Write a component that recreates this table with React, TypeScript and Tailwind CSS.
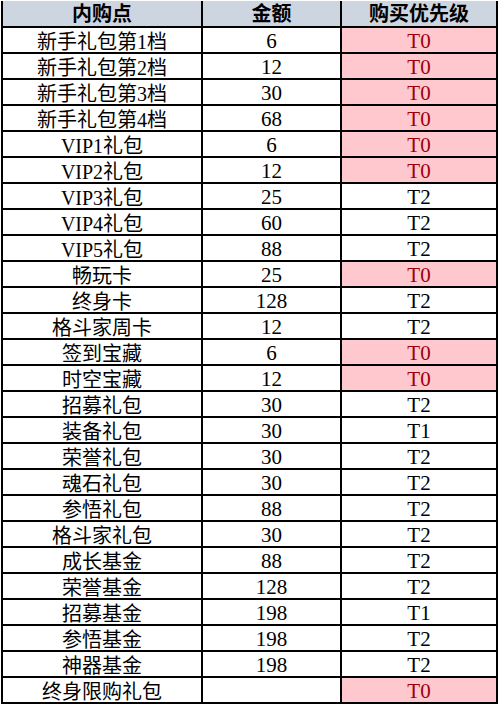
import React from 'react'

type Row = { name: string; amount: string; level: string }

const ROWS: Row[] = [
  { name: '新手礼包第1档', amount: '6', level: 'T0' },
  { name: '新手礼包第2档', amount: '12', level: 'T0' },
  { name: '新手礼包第3档', amount: '30', level: 'T0' },
  { name: '新手礼包第4档', amount: '68', level: 'T0' },
  { name: 'VIP1礼包', amount: '6', level: 'T0' },
  { name: 'VIP2礼包', amount: '12', level: 'T0' },
  { name: 'VIP3礼包', amount: '25', level: 'T2' },
  { name: 'VIP4礼包', amount: '60', level: 'T2' },
  { name: 'VIP5礼包', amount: '88', level: 'T2' },
  { name: '畅玩卡', amount: '25', level: 'T0' },
  { name: '终身卡', amount: '128', level: 'T2' },
  { name: '格斗家周卡', amount: '12', level: 'T2' },
  { name: '签到宝藏', amount: '6', level: 'T0' },
  { name: '时空宝藏', amount: '12', level: 'T0' },
  { name: '招募礼包', amount: '30', level: 'T2' },
  { name: '装备礼包', amount: '30', level: 'T1' },
  { name: '荣誉礼包', amount: '30', level: 'T2' },
  { name: '魂石礼包', amount: '30', level: 'T2' },
  { name: '参悟礼包', amount: '88', level: 'T2' },
  { name: '格斗家礼包', amount: '30', level: 'T2' },
  { name: '成长基金', amount: '88', level: 'T2' },
  { name: '荣誉基金', amount: '128', level: 'T2' },
  { name: '招募基金', amount: '198', level: 'T1' },
  { name: '参悟基金', amount: '198', level: 'T2' },
  { name: '神器基金', amount: '198', level: 'T2' },
  { name: '终身限购礼包', amount: '', level: 'T0' },
]

const font = "font-['Liberation_Serif','Noto_Sans_CJK_SC',serif]"

export default function App() {
  return (
    <div className={`w-[499px] h-[704px] bg-white pl-[1px] ${font}`}>
      {/* Header */}
      <div className="grid grid-cols-[202px_139px_156px] h-[28px] pt-[1px]">
        <div className="flex items-center justify-center border-x-2 border-b-2 border-black bg-[#cdd5e1] text-[20px] font-bold leading-none">
          内购点
        </div>
        <div className="flex items-center justify-center border-r-2 border-b-2 border-black bg-[#cdd5e1] text-[20px] font-bold leading-none">
          金额
        </div>
        <div className="flex items-center justify-center border-r-2 border-b-2 border-black bg-[#cdd5e1] text-[20px] font-bold leading-none">
          购买优先级
        </div>
      </div>

      {/* Rows */}
      {ROWS.map((row) => {
        const hot = row.level === 'T0'
        return (
          <div key={row.name} className="grid grid-cols-[202px_139px_156px] h-[26px]">
            <div className="flex items-end justify-center border-x-2 border-b-2 border-black text-[20px] leading-none">
              {row.name}
            </div>
            <div className="flex items-end justify-center border-r-2 border-b-2 border-black text-[21px] leading-none">
              {row.amount}
            </div>
            <div
              className={`flex items-end justify-center border-r-2 border-b-2 border-black text-[21px] leading-none ${
                hot ? 'bg-[#ffc7ce] text-[#9c0006]' : 'text-black'
              }`}
            >
              {row.level}
            </div>
          </div>
        )
      })}
    </div>
  )
}
